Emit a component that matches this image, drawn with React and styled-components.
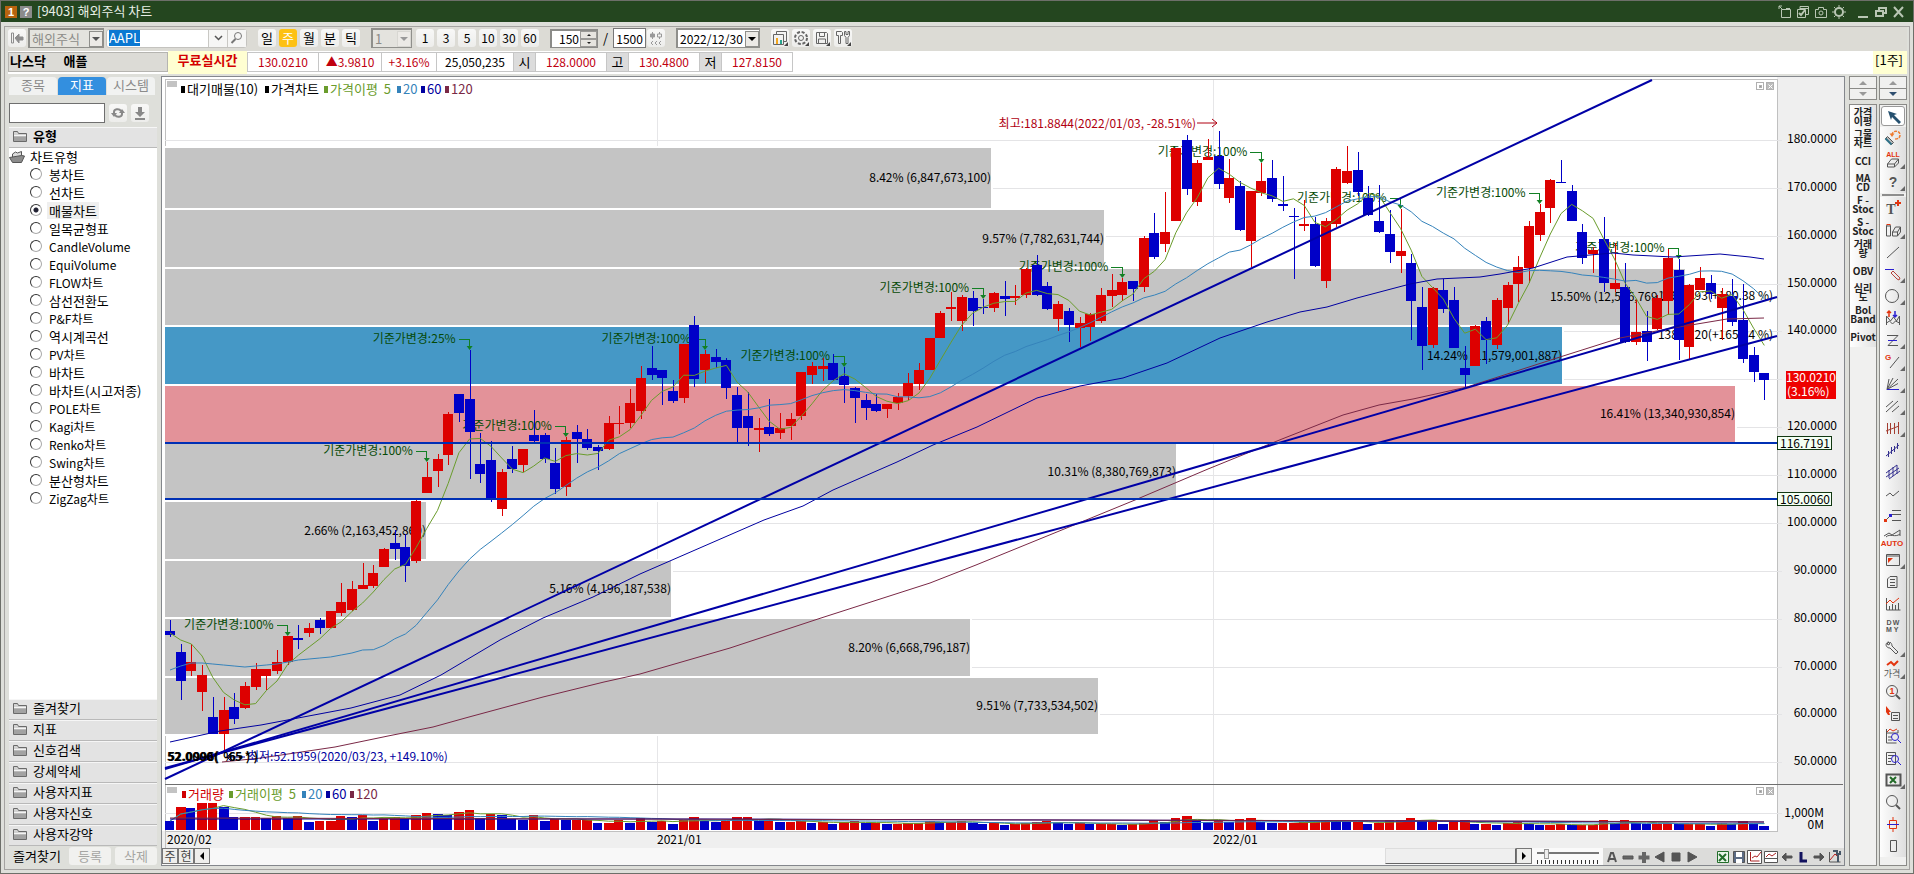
import React, { useEffect, useLayoutEffect, useRef, useState } from "react";
import styled, { createGlobalStyle, css } from "styled-components";

const UI = `"Noto Sans CJK KR", "Liberation Sans", sans-serif`;

const GlobalStyle = createGlobalStyle`
  *, *::before, *::after { box-sizing: border-box; }
  html, body, #root { height: 100%; }
  body { margin: 0; background: #dddcd7; color: #000; font: 13px/18px ${UI}; overflow: hidden; }
  button, input, select { font: inherit; color: inherit; margin: 0; padding: 0; border: 0; border-radius: 0; background: none; }
  svg { display: block; }
`;

/* ---------- window shell ---------- */
const Window = styled.div`
  display: flex; flex-direction: column; height: 100vh; min-height: 640px;
  border: 1px solid #6d6f69; background: #dedfda;
`;
const TitleBar = styled.header`
  display: flex; align-items: center; height: 21px; flex: none; padding: 0 6px 0 4px;
  background: #24461f; color: #e9efe6;
`;
const Badge = styled.span`
  width: 12px; height: 12px; margin-right: 3px; font: bold 11px/12px "Liberation Sans", sans-serif;
  text-align: center; color: #fff; background: ${(p) => p.$bg};
`;
const Title = styled.h1` margin: 0 auto 0 2px; font-size: 13px; line-height: 18px; font-weight: 400; padding-bottom: 2px; `;
const TitleTools = styled.div` display: flex; gap: 2px; color: #b9c6b4; `;
const TitleButton = styled.button` width: 16px; height: 16px; margin-left: ${(p) => (p.$gap ? 6 : 0)}px; `;
const Body = styled.div` display: flex; flex: 1; min-height: 0; padding: 4px 3px 3px; `;
const Frame = styled.div`
  display: flex; flex-direction: column; flex: 1; min-width: 0; padding: 0 2px 3px 3px;
  border: 1px solid #a5a3a1;
`;

/* ---------- toolbar ---------- */
const Toolbar = styled.div` display: flex; align-items: center; gap: 11px; height: 24px; flex: none; padding-bottom: 2px; background: #dcdbd5; `;
const Group = styled.div` display: flex; align-items: center; gap: ${(p) => p.$gap ?? 3}px; `;
const Key = styled.button`
  display: grid; place-items: center; width: 18px; height: 18px; border-radius: 3px; line-height: 16px;
  background: ${(p) => (p.$on ? "#fdc113" : "linear-gradient(#f8f8f7, #ededeb)")};
  color: ${(p) => (p.$on ? "#fff" : "#000")};
  ${(p) => p.$num && css`font-size: 12px;`}
`;
const SelectWrap = styled.span`
  display: grid; align-items: center; width: ${(p) => p.$w}px; height: 20px;
  border: 2px solid #8f8f8b; border-width: 2px 1px 1px 2px; background: ${(p) => p.$bg || "#e4e3de"};
  & > * { grid-area: 1 / 1; }
`;
const Select = styled.select`
  appearance: none; width: 100%; height: 16px; padding-left: 2px; font-size: ${(p) => (p.$num ? 12 : 13)}px; line-height: 16px;
  color: ${(p) => p.$color || "#8c8c88"}; outline: 0;
`;
const Arrow = styled.span`
  justify-self: end; display: grid; place-items: center; width: 14px; height: 16px;
  border: 1px solid ${(p) => p.$bc || "#8f8f8b"}; background: #eceae6; pointer-events: none;
  &::after { content: ""; border: 4px solid transparent; border-top-color: ${(p) => p.$c || "#555"}; border-bottom: 0; }
`;
const SearchField = styled.div`
  display: flex; width: 141px; height: 19px; border-radius: 3px; background: #fff; border: 1px solid #c4c3bf;
  button { width: 19px; display: grid; place-items: center; border-left: 1px solid #c9c8c4; background: #f6f6f5; }
`;
const CodeInput = styled.input`
  width: 101px; padding-left: 2px; outline: 0; line-height: 16px;
  &::selection { background: #0a78d2; color: #fff; }
`;
const CountField = styled.div`
  display: flex; width: 48px; height: 19px; border: 2px solid #8b8b88; border-width: 2px 1px 1px 2px; background: #fff;
  input { width: 28px; padding-right: 1px; text-align: right; font-size: 12px; line-height: 15px; outline: 0; }
`;
const Stepper = styled.div`
  display: flex; flex-direction: column; flex: 1;
  button { flex: 1; display: grid; place-items: center; background: #e6e4df; border: 1px solid #9a9996; }
`;
const TotalInput = styled.input`
  width: 33px; height: 20px; border: 1px solid #777; background: #fff; text-align: center; font-size: 12px; line-height: 16px; outline: 0;
`;

/* ---------- quote row ---------- */
const QuoteRow = styled.div` display: flex; align-items: stretch; height: 23px; flex: none; background: #fff; `;
const Name = styled.div`
  width: 160px; height: 20px; margin-top: 1px; padding-left: 1px; border: 1px solid #b5b4b0; background: #dcdbd6;
  font-weight: 700; line-height: 16px; white-space: pre;
`;
const LiveTag = styled.div`
  width: 79px; background: #ffffd2; color: #d40000; font-weight: 700; text-align: center; line-height: 18px;
`;
const Cell = styled.div`
  width: ${(p) => p.$w}px; height: 20px; margin-top: 1px; border: 1px solid #c6c6c6; border-left-width: ${(p) => (p.$first ? 1 : 0)}px;
  background: ${(p) => (p.$head ? "#dcdcdc" : "#fff")}; color: ${(p) => p.$c || "#000"};
  font-size: ${(p) => (p.$head ? 13 : 12)}px; line-height: 18px; text-align: center;
`;
const PeriodTag = styled.div` margin-left: auto; width: 34px; padding-right: 4px; background: #ffffd2; text-align: right; line-height: 18px; `;

/* ---------- main grid ---------- */
const Main = styled.main`
  display: grid; grid-template-columns: 149px minmax(0, 1fr) 58px; column-gap: 4px;
  flex: 1; min-height: 0; padding-top: 2px;
`;
const Sidebar = styled.aside` display: flex; flex-direction: column; min-height: 0; padding-left: 1px; `;
const Tabs = styled.div` display: flex; gap: 1px; height: 20px; padding-top: 1px; `;
const Tab = styled.button`
  width: 48px; height: 18px; padding-bottom: 2px; border-radius: 4px 4px 0 0; line-height: 16px;
  background: ${(p) => (p.$on ? "#338fdf" : "#f1f2f1")}; color: ${(p) => (p.$on ? "#fff" : "#8b8b8b")};
`;
const FindRow = styled.div` display: flex; align-items: center; gap: 4px; height: 31px; padding-top: 3px; flex: none; `;
const FindInput = styled.input` width: 96px; height: 20px; border: 1px solid #6f6f6f; background: #fff; `;
const SectionHead = styled.button`
  display: flex; align-items: center; gap: 5px; flex: none; width: 100%; height: 21px; padding: 0 0 3px 3px; line-height: 16px;
  background: #e3e3e3; border-bottom: 1px solid #b9b9b9; border-top: 1px solid #f6f6f6; text-align: left;
  font-weight: ${(p) => (p.$bold ? 700 : 400)};
`;
const Tree = styled.div` flex: 1; min-height: 0; overflow: hidden; background: #fff; `;
const TreeRoot = styled.div` display: flex; align-items: center; gap: 5px; height: 17px; line-height: 16px; `;
const Option = styled.label`
  display: flex; align-items: center; gap: 5px; height: 18px; padding-left: 21px; font-size: 13px; line-height: 18px;
  span { padding: 0 2px; font-size: ${(p) => (p.$latin ? 12 : 13)}px; line-height: 17px; background: ${(p) => (p.$on ? "#efefef" : "none")}; }
`;
const Radio = styled.input`
  appearance: none; width: 12px; height: 12px; border-radius: 50%; border: 1px solid #333; background: #fff;
  border-right-color: #aaa; border-bottom-color: #aaa;
  &:checked { background: radial-gradient(#223 0 2px, #fff 3px); }
`;
const SideFoot = styled.div`
  display: flex; align-items: center; gap: 4px; height: 20px; flex: none; padding: 0 0 1px 4px;
  button { width: 42px; height: 18px; border-radius: 3px; background: #f1f1ef; color: #a5a5a2; line-height: 16px; }
  span { width: 52px; }
`;

/* ---------- chart panel ---------- */
const ChartPanel = styled.section`
  display: flex; flex-direction: column; min-width: 0; min-height: 0;
  border: 1px solid #84878c; background: #fff;
`;
const ChartArea = styled.div`
  flex: 1; min-height: 0; overflow: hidden;
  svg { width: 100%; height: 100%; font: 12px ${UI}; }
`;
const ChartFoot = styled.div` display: flex; height: 17px; flex: none; background: #fafafa; `;
const FootKey = styled.button`
  display: grid; place-items: center; width: 16px; height: 16px; font-size: 12px; line-height: 14px; color: #444;
  border: 1px solid #777; background: #eeeeec;
`;
const Track = styled.div` display: flex; flex: 1; justify-content: flex-end; background: #f8f8f8; `;
const Thumb = styled.div` width: 131px; height: 16px; border: 1px solid #888; border-color: #ddd #666 #666 #ddd; background: #efefef; `;
const ZoomRange = styled.input`
  appearance: none; width: 62px; height: 16px; margin: 0 4px 0 5px;
  background:
    linear-gradient(#777, #777) 0 4px / 100% 2px no-repeat,
    repeating-linear-gradient(90deg, #333 0 1px, transparent 1px 4px) 0 12px / 100% 4px no-repeat;
  &::-webkit-slider-thumb { appearance: none; width: 5px; height: 10px; margin-top: -5px; background: #eee; border: 1px solid #999; }
`;
const FootTools = styled.div` display: flex; align-items: center; width: 241px; padding-left: 1px; background: #dcdcda; `;
const FootTool = styled.button` display: grid; place-items: center; width: 16px; height: 17px; margin-left: ${(p) => (p.$gap ? 15 : 0)}px; `;

/* ---------- right columns ---------- */
const ToolColumns = styled.div` display: grid; grid-template-columns: 28px 28px; column-gap: 2px; min-height: 0; `;
const ToolColumn = styled.div` display: flex; flex-direction: column; gap: 4px; min-height: 0; `;
const Pager = styled.div`
  flex: none; border: 1px solid #8a8a87;
  button { display: grid; place-items: center; width: 100%; height: 11px; background: #f0f0ef; }
  button + button { border-top: 1px solid #8a8a87; }
`;
const ToolList = styled.div`
  display: flex; flex-direction: column; flex: 1; min-height: 0; overflow: hidden;
  border: 1px solid #8a8a87; background: #f0f0ef;
`;
const Indicator = styled.button`
  flex: none; height: 22px; font-size: 10px; font-weight: 700; line-height: 9px; white-space: pre; color: #222;
  background: linear-gradient(90deg, #fff, #e2e2e2);
`;
const ToolButton = styled.button`
  display: grid; place-items: center; flex: none; height: 22px; background: linear-gradient(90deg, #fdfdfd, #dedede);
  ${(p) => p.$on && css`background: #fff; border: 1px solid #999; border-radius: 3px; height: 20px; margin: 1px;`}
`;
const Rule = styled.hr` flex: none; width: 22px; height: 2px; margin: 1px 2px; border: 0; background: #8d8d8d; `;

/* ---------- data ---------- */
/* direction, body top, body bottom, high, low */
const CANDLES = `
b 631 635 620 637|b 652 681 644 700|r 662 671 644 676|r 675 692 665 711|b 717 734 697 734|r 710 734 697 752|b 707 719 693 724|r 686 708 682 709|r 669 687 663 690|r 669 676 669 690|
r 662 671 650 674|r 636 662 636 665|b 638 640 625 649|r 628 633 623 637|b 620 628 618 634|r 611 628 611 628|r 602 613 583 616|r 589 610 581 611|r 585 589 563 589|r 573 586 565 588|
r 549 567 548 567|b 543 549 530 560|b 547 566 534 582|r 501 561 499 563|r 477 493 462 493|r 459 471 454 487|r 414 455 412 465|b 394 413 394 422|b 399 432 350 479|b 464 474 433 483|
b 460 499 441 502|r 472 509 469 516|b 459 469 446 473|r 449 465 449 472|b 435 441 410 444|b 435 459 433 463|b 463 489 448 494|r 440 487 437 496|b 432 439 425 463|b 439 448 429 450|
b 447 451 445 470|r 423 449 416 450|r 423 424 406 434|r 403 423 389 428|r 378 411 366 419|b 368 375 346 380|b 370 378 370 405|b 391 401 380 403|r 344 398 344 403|b 325 379 316 387|
r 354 370 350 383|b 357 362 349 368|b 360 388 358 399|b 395 428 387 442|b 416 428 392 446|r 428 430 418 452|b 427 434 399 436|r 428 433 413 439|r 419 426 413 440|r 372 416 372 420|
r 366 375 362 384|r 366 369 358 381|b 363 380 354 381|b 376 385 367 403|b 388 398 387 423|b 400 408 394 420|b 404 411 394 412|r 404 409 404 418|r 397 403 393 410|r 383 396 373 400|
r 370 384 363 390|r 338 370 338 370|r 313 338 311 338|r 307 309 292 321|r 297 321 295 331|b 298 311 291 326|b 307 308 299 314|r 293 308 292 312|b 296 299 281 316|r 296 298 285 305|
r 269 295 268 298|b 265 295 255 296|b 286 309 282 310|r 304 319 301 331|b 311 325 308 342|r 323 328 317 347|r 314 327 313 341|r 295 321 288 323|r 290 296 274 307|r 282 295 278 301|
b 281 289 281 301|r 238 287 236 292|b 233 257 213 259|r 232 244 192 252|r 148 221 148 221|b 140 189 135 195|r 163 202 160 206|r 157 160 139 160|b 156 184 131 189|r 178 198 159 203|
b 186 230 181 231|r 191 241 191 267|r 181 193 163 196|b 178 199 160 202|b 204 206 176 211|b 216 217 208 279|r 224 226 200 231|b 224 266 217 267|r 221 281 218 288|r 169 224 167 227|
r 171 183 146 184|b 170 192 152 196|b 198 215 186 216|b 221 232 185 233|b 234 252 210 263|r 251 256 209 273|b 263 301 254 340|b 307 346 287 370|r 288 345 287 348|b 290 309 279 313|
b 300 348 287 348|b 368 375 346 387|r 326 366 325 366|b 321 340 317 364|r 300 345 298 349|r 285 308 282 324|r 267 284 256 302|r 226 268 221 283|r 212 235 204 241|r 180 208 179 223|
b 182 183 160 183|b 191 221 185 221|b 232 258 224 264|r 250 254 247 273|b 239 283 217 292|r 283 289 243 292|b 287 342 263 343|r 332 342 299 345|b 331 342 311 361|r 298 329 295 330|
r 258 301 249 315|b 270 340 259 360|r 285 347 284 359|r 278 290 267 290|b 283 294 275 299|r 294 308 288 340|b 296 322 279 326|b 320 359 284 363|b 355 372 347 382|b 373 380 373 400`
  .trim().split("|").map((row) => {
    const [d, top, bottom, high, low] = row.trim().split(" ");
    return { up: d === "r", top: +top, bottom: +bottom, high: +high, low: +low };
  });

const VOLUMES = [
  9, 23, 22, 27, 27, 23, 13, 13, 13, 12, 14, 12, 14, 8, 9, 9, 14, 13, 15, 9, 12, 13, 12, 15, 17, 16, 15, 18, 20, 12,
  16, 15, 11, 10, 15, 9, 11, 10, 10, 10, 7, 7, 10, 7, 12, 8, 9, 6, 10, 13, 9, 8, 9, 13, 13, 9, 11, 8, 8, 9,
  7, 8, 6, 8, 9, 7, 7, 6, 6, 7, 7, 9, 8, 8, 9, 7, 6, 7, 5, 6, 7, 8, 9, 7, 6, 7, 6, 6, 6, 5,
  6, 7, 10, 8, 12, 14, 9, 8, 9, 8, 11, 12, 8, 7, 7, 7, 8, 9, 10, 9, 8, 8, 6, 7, 10, 10, 12, 9, 9, 6,
  8, 10, 6, 6, 5, 7, 8, 6, 5, 5, 6, 5, 5, 5, 10, 7, 10, 7, 6, 6, 7, 6, 6, 6, 4, 7, 6, 9, 6, 4,
];

const PROFILE = [
  [148, 208, 991, "8.42% (6,847,673,100)"],
  [210, 267, 1104, "9.57% (7,782,631,744)"],
  [269, 325, 1685, "15.50% (12,596,769,148)"],
  [327, 384, 1562, "14.24% (11,579,001,887)", "#4598c6"],
  [386, 442, 1735, "16.41% (13,340,930,854)", "#e39299"],
  [444, 500, 1176, "10.31% (8,380,769,873)"],
  [502, 559, 426, "2.66% (2,163,452,860)"],
  [561, 617, 671, "5.16% (4,196,187,538)"],
  [619, 676, 970, "8.20% (6,668,796,187)"],
  [678, 734, 1098, "9.51% (7,733,534,502)"],
];

const SPLITS = [[11, "100%"], [24, "100%"], [28, "25%"], [37, "100%"], [50, "100%"], [63, "100%"], [76, "100%"], [89, "100%"], [102, "100%"], [115, "100%"], [128, "100%"], [141, "100%"]];

const MA60 = [[170, 742], [220, 731], [261, 725], [298, 718], [351, 708], [400, 695], [441, 675], [473, 656], [500, 640], [543, 618], [593, 597], [640, 574], [764, 520], [803, 506], [833, 490], [897, 462], [933, 445], [977, 427], [1037, 398], [1080, 386], [1123, 378], [1167, 363], [1220, 338], [1267, 322], [1300, 312], [1327, 307], [1357, 298], [1410, 284], [1437, 279], [1480, 277], [1500, 274], [1533, 268], [1567, 257], [1613, 253], [1633, 255], [1673, 257], [1720, 254], [1750, 257], [1764, 259]];
const MA120 = [[222, 762], [261, 758], [335, 747], [388, 736], [433, 727], [469, 717], [543, 697], [604, 682], [640, 674], [730, 648], [821, 618], [930, 583], [976, 565], [1074, 525], [1135, 500], [1208, 469], [1282, 439], [1343, 415], [1379, 405], [1413, 399], [1467, 387], [1560, 357], [1620, 338], [1667, 329], [1727, 319], [1764, 318]];
const MA20_HEAD = [670, 666, 663, 663, 664, 665, 666, 667, 666, 665, 664, 662, 660, 659, 658, 657, 655, 653, 650];
const MA5_HEAD = [633, 640, 644, 656];
const TRENDS = [[165, 779, 1652, 80], [165, 769, 1777, 297], [165, 768, 1777, 336]];

const CHART_TYPES = ["봉차트", "선차트", "매물차트", "일목균형표", "CandleVolume", "EquiVolume", "FLOW차트", "삼선전환도", "P&F차트", "역시계곡선", "PV차트", "바차트", "바차트(시고저종)", "POLE차트", "Kagi차트", "Renko차트", "Swing차트", "분산형차트", "ZigZag차트"];
const SECTIONS = ["즐겨찾기", "지표", "신호검색", "강세약세", "사용자지표", "사용자신호", "사용자강약"];
const INDICATORS = ["가격\n이평", "그물\n차트", "CCI", "MA\nCD", "F -\nStoc", "S -\nStoc", "거래\n량", "OBV", "심리\n도", "Bol\nBand", "Pivot"];

const RED = "#dd0000";
const BLUE = "#0000c8";
const GREEN = "#6a9c2c";
const SKY = "#3583bb";
const NAVY = "#0000a0";
const WINE = "#7a2846";

const candleX = (i) => 170 + i * 10.7;

function average(values, span, head) {
  return values.map((v, i) => {
    if (i < span - 1) return head ? head[i] : values.slice(0, i + 1).reduce((a, b) => a + b, 0) / (i + 1);
    return values.slice(i - span + 1, i + 1).reduce((a, b) => a + b, 0) / span;
  });
}
const CLOSES = CANDLES.map((c) => (c.up ? c.top : c.bottom));
const MA5 = average(CLOSES, 5, MA5_HEAD);
const MA20 = average(CLOSES, 20, MA20_HEAD);
const VMA5 = average(VOLUMES, 5);
const VMA20 = average(VOLUMES, 20);

/* ---------- chart ---------- */
function Legend({ y, items }) {
  return items.map(([x, text, color]) => (
    <g key={text + x} fill={color}>
      <rect x={x - 162} y={y - 7} width="4" height="7" />
      <text x={x - 156} y={y + 1} fontSize="13" style={{ whiteSpace: "pre" }}>{text}</text>
    </g>
  ));
}

function PaneButtons({ x, y }) {
  return (
    <g fill="none" stroke="#b0b0b0" shapeRendering="crispEdges">
      <rect x={x} y={y} width="7" height="7" />
      <rect x={x + 3} y={y + 3} width="2" height="2" fill="#999" />
      <rect x={x + 10} y={y} width="7" height="7" fill="#bbb" />
      <path d={`M${x + 12} ${y + 2}l4 4m0-4l-4 4`} stroke="#fff" shapeRendering="auto" />
    </g>
  );
}

function StockChart() {
  const host = useRef(null);
  const [{ w, h }, setSize] = useState({ w: 1682, h: 771 });
  useLayoutEffect(() => {
    const measure = () => {
      const r = host.current.getBoundingClientRect();
      setSize({ w: Math.round(r.width), h: Math.round(r.height) });
    };
    measure();
    const ro = new ResizeObserver(measure);
    ro.observe(host.current);
    return () => ro.disconnect();
  }, []);

  const right = w - 67;
  const split = h - 64;
  const X = (v) => 3 + ((v - 165) * (right - 3)) / 1612;
  const Y = (v) => 2 + ((v - 79) * (split - 2)) / 705;
  const base = h - 18;
  const line = (pts) => pts.map(([a, b]) => `${X(a).toFixed(1)},${Y(b).toFixed(1)}`).join(" ");
  const series = (vals) => line(vals.map((v, i) => [candleX(i), v]));
  const volLine = (vals) => vals.map((v, i) => `${X(candleX(i)).toFixed(1)},${(base - v).toFixed(1)}`).join(" ");
  const cw = Math.max(3, Math.round((10 * (right - 3)) / 1612));

  return (
    <ChartArea ref={host}>
      <svg role="img" aria-label="AAPL 주봉 차트">
        <rect x={right} y="0" width={w - right} height={h} fill="#efefef" />
        <rect x="0" y={h - 17} width={w} height="17" fill="#efefef" />
        <g shapeRendering="crispEdges" fill="none">
          <path d={`M3 ${h}V2.5H${right + 0.5}V${h - 16.5}H3`} stroke="#c0c0c0" />
          {Array.from({ length: 14 }, (_, i) => (
            <path key={i} d={`M3 ${Math.round(Y(140 + i * 47.87))}.5H${right + 5}`} stroke="#e4e4e6" />
          ))}
          {[657, 1213].map((v) => <path key={v} d={`M${Math.round(X(v))}.5 3V${h - 18}`} stroke="#e6e6e8" />)}
          <path d={`M3 ${base - 17}.5H${right + 5}`} stroke="#e4e4e6" />
        </g>

        <g shapeRendering="crispEdges">
          {PROFILE.map(([t, b, r, , fill]) => (
            <rect key={t} x="3" y={Y(t)} width={X(r) - 3} height={Y(b) - Y(t)} fill={fill || "#c4c4c4"} stroke="#fff" strokeWidth="4" paintOrder="stroke" />
          ))}
        </g>
        <g textAnchor="end">
          {PROFILE.map(([t, b, r, label]) => <text key={t} x={X(r)} y={Y((t + b) / 2) + 4}>{label}</text>)}
          <text x={X(1773)} y={Y(296) + 4}>146.6293(+180.38 %)</text>
          <text x={X(1773)} y={Y(335) + 4}>138.4720(+165.84 %)</text>
        </g>

        <g fill="#064a06">
          {SPLITS.map(([i, pct]) => {
            const x = X(candleX(i));
            const y = Y(CANDLES[i].high - 11);
            return (
              <g key={i}>
                <text x={x - 14} y={y + 4} textAnchor="end">기준가변경:{pct}</text>
                <path d={`M${x - 11} ${y}H${x}V${y + 7}`} fill="none" stroke="#128024" shapeRendering="crispEdges" />
                <path d={`M${x - 3} ${y + 7}h6l-3 4z`} fill="#128024" />
              </g>
            );
          })}
        </g>

        <g shapeRendering="crispEdges">
          {CANDLES.map((c, i) => {
            const x = Math.round(X(candleX(i)));
            const fill = c.up ? RED : BLUE;
            const top = Math.round(Y(c.top));
            return (
              <g key={i} fill={fill}>
                <rect x={x} y={Math.round(Y(c.high))} width="1" height={Math.max(1, Math.round(Y(c.low) - Y(c.high)))} />
                <rect x={x - 5} y={top} width={cw} height={Math.max(1, Math.round(Y(c.bottom) - top))} />
              </g>
            );
          })}
        </g>

        <g fill="none" strokeWidth="1">
          <polyline points={series(MA5)} stroke={GREEN} />
          <polyline points={series(MA20)} stroke={SKY} />
          <polyline points={line(MA60)} stroke={NAVY} />
          <polyline points={line(MA120)} stroke={WINE} />
        </g>
        <g stroke="#0000a6" strokeWidth="2">
          {TRENDS.map(([a, b, c, d]) => <line key={d} x1={X(a)} y1={Y(b)} x2={X(c)} y2={Y(d)} />)}
          <path d={`M3 ${Y(443)}H${right}M3 ${Y(499)}H${right}`} stroke="#0030b4" shapeRendering="crispEdges" />
        </g>

        <g fill="#b00010">
          <text x={X(1196)} y={Y(123) + 5} textAnchor="end">최고:181.8844(2022/01/03, -28.51%)</text>
          <path d={`M${X(1197)} ${Y(123)}h20m-5-4l5 4-5 4`} fill="none" stroke="#b00010" />
        </g>
        <g fill="#0000a0">
          <text x={X(248)} y={Y(757) + 4}>최저:52.1959(2020/03/23, +149.10%)</text>
          <path d={`M${X(245)} ${Y(757)}h-18m4-4l-4 4 4 4`} fill="none" stroke="#0000a0" />
        </g>
        <g fontWeight="700">
          <text x={X(167)} y={Y(757) + 4} style={{ whiteSpace: "pre" }}>52.0000(  %5 * )</text>
          <text x={X(168)} y={Y(757) + 4} style={{ whiteSpace: "pre" }}>52.0996(  -6 • )</text>
        </g>

        <rect x="5" y="4" width="10" height="6" fill="#c3c3c3" />
        <Legend y={16} items={[[181, "대기매물(10)", "#000"], [265, "가격차트", "#000"], [324, "가격이평  5", GREEN], [397, "20", SKY], [421, "60", NAVY], [445, "120", WINE]]} />
        <PaneButtons x={right - 20.5} y={5.5} />

        <g>
          {Array.from({ length: 14 }, (_, i) => i !== 5 && (
            <text key={i} x={w - 7} y={Y(139 + i * 47.87) + 4} textAnchor="end">{180 - i * 10}.0000</text>
          ))}
        </g>
        <g shapeRendering="crispEdges">
          <rect x={w - 58} y={Y(371)} width="50" height="28" fill="#ee0000" />
          {[443, 499].map((v) => (
            <rect key={v} x={right + 0.5} y={Y(v) - 6.5} width="54" height="13" fill="#f4fff4" stroke="#123812" />
          ))}
        </g>
        <g fill="#fff">
          <text x={w - 58} y={Y(382)}>130.0210</text>
          <text x={w - 57} y={Y(396)}>(3.16%)</text>
        </g>
        <text x={right + 3} y={Y(443) + 5}>116.7191</text>
        <text x={right + 3} y={Y(499) + 5}>105.0060</text>

        <path d={`M3 ${split + 0.5}H${w - 1}`} stroke="#6e6e6e" />
        <rect x="5" y={split + 3} width="10" height="6" fill="#c3c3c3" />
        <g shapeRendering="crispEdges">
          {VOLUMES.map((v, i) => (
            <rect key={i} x={Math.round(X(candleX(i))) - 5} y={base - v} width={cw - 1 + (i % 2)} height={v} fill={i > 0 && v >= VOLUMES[i - 1] ? RED : BLUE} />
          ))}
        </g>
        <g fill="none">
          <polyline points={volLine(VMA5)} stroke={GREEN} />
          <polyline points={volLine(VMA20)} stroke={SKY} />
          <path d={`M${X(170)} ${base - 11}L${X(700)} ${base - 11}L${X(1764)} ${base - 8}`} stroke={NAVY} />
          <path d={`M${X(170)} ${base - 12}L${X(1500)} ${base - 9}L${X(1764)} ${base - 8}`} stroke={WINE} />
        </g>
        <Legend y={split + 14} items={[[182, "거래량", "#d00000"], [229, "거래이평  5", GREEN], [302, "20", SKY], [326, "60", NAVY], [350, "120", WINE]]} />
        <PaneButtons x={right - 20.5} y={split + 3.5} />
        <g textAnchor="end">
          <text x={w - 20} y={base - 13}>1,000M</text>
          <text x={w - 20} y={base - 1}>0M</text>
        </g>
        <text x="5" y={h - 4}>2020/02</text>
        <text x={X(657)} y={h - 4}>2021/01</text>
        <text x={X(1213)} y={h - 4}>2022/01</text>
      </svg>
    </ChartArea>
  );
}

/* ---------- icons ---------- */
function Icon({ w = 16, h = 16, children, ...rest }) {
  return (
    <svg width={w} height={h} viewBox={`0 0 ${w} ${h}`} fill="none" stroke="currentColor" aria-hidden="true" {...rest}>
      {children}
    </svg>
  );
}
const Folder = ({ open }) => (
  <Icon w={16} h={14} stroke="#555">
    {open ? (
      <>
        <path d="M3.5 7V4l3-2 2 1 4-1.500v4" fill="#ddd" />
        <path d="M.5 7.500l12-2 3 .5-3 6.500h-9z" fill="#8c8c8c" />
      </>
    ) : (
      <>
        <path d="M1.500 12.500v-10h4l1 2h8v8z" fill="#d2d2d2" stroke="#6a6a6a" />
        <path d="M2 7.500h12v4.500H2z" fill="#a2a2a2" stroke="none" />
        <path d="M2 6.500h12" stroke="#f4f4f4" />
      </>
    )}
  </Icon>
);
const Tri = ({ up, c = "#999", s = 8 }) => (
  <Icon stroke="none" fill={c} viewBox="0 0 8 4" width={s} height={s / 2}>
    <path d={up ? "M0 4l4-4 4 4z" : "M0 0h8L4 4z"} />
  </Icon>
);

const G = "#555";
const R = "#e2340f";
const B = "#2a1fd0";
const corner = <path d="M25 20v-5l-5 5z" fill="#666" stroke="none" />;
const T = ({ x, y, s = 8, f = G, w = 700, children, font = "Liberation Sans" }) => (
  <text x={x} y={y} fontSize={s} fill={f} stroke="none" fontWeight={w} fontFamily={`"${font}", "Noto Sans CJK KR", sans-serif`} textAnchor="middle">{children}</text>
);

const DRAW_TOOLS = [
  ["선택", <path d="M6 4l9 3-3 1 7 7-2 2-7-7-1 3z" fill="#25506f" stroke="none" />],
  ["되돌리기", <><path d="M12 8c0-5 8-5 8 0 0 3-2 4-5 4" stroke="#ee7a2e" strokeWidth="1.500" strokeDasharray="3 1" /><path d="M9.500 6.500h5L12 10z" fill="#ee7a2e" stroke="none" /><path d="M5.500 11.500l2-2 6 6-2 2z" fill="#bbb" /><path d="M5.500 11.500l6 6" stroke="#2d6f86" strokeWidth="2" /></>],
  ["전체 지우기", <><T x={13} y={8} s={7} f={R}>ALL</T><path d="M7.500 15l4-5h7l-4 5zM7.500 15v3h7v-3M14.500 18l4-4v-4" />{corner}</>],
  ["도움말", <><T x={13} y={16} s={14}>?</T>{corner}</>],
  null,
  ["문자", <><T x={11} y={17} s={14} font="Liberation Serif">T</T><path d="M18 3v6M15 6h6" stroke={R} strokeWidth="2" /></>],
  ["도형", <><path d="M6.500 7v10h4V7zM6.500 7c0-2 4-2 4 0" /><path d="M6.500 5.500h4" stroke={R} /><path d="M12.500 13l3-5h5l-3 5zM12.500 13v4h5v-4M17.500 17l3-4V8" />{corner}</>],
  ["추세선", <path d="M7 17L19 6" />],
  ["지우개", <><path d="M5 6.500h9" stroke={B} /><path d="M11 10l2-2 7 7-1 2-2-1z" stroke="#b5423a" />{corner}</>],
  ["원", <><circle cx="12" cy="11" r="6.500" />{corner}</>],
  ["파동", <><path d="M6.500 18V9l4 5 3-4 3 4 3-5v9M6.500 16l3-2 3 3 3-3 4 2" /><path d="M9 10V4M7 6l2-2 2 2" stroke={R} strokeWidth="1.500" /><path d="M15 4v6M13 8l2 2 2-2" stroke={B} strokeWidth="1.500" /></>],
  ["Z선", <><path d="M7 6.500h11L8 16.500h10" /><path d="M8 11.500h9" stroke={B} />{corner}</>],
  ["각도선", <><T x={8} y={9} f={R}>G</T><path d="M10 17L19 6" />{corner}</>],
  ["부채꼴", <><path d="M7 16.500L9 6M7 16.500L13 5M7 16.500L18 6M7 16.500l11-6" /><path d="M7 16.500h12" stroke={B} />{corner}</>],
  ["평행선", <><path d="M6 12l7-6M6 17L18 6M12 17l7-6" />{corner}</>],
  ["시간대", <><path d="M7.500 6v11M10.500 6v11M14.500 6v11M18.500 5v12" stroke="#a33c30" /><path d="M6 14l13-5" stroke="#a33c30" />{corner}</>],
  ["채널1", <path d="M6 17l13-11M8.500 12v6M11.500 8v7M14.500 7v6M17.500 4v6" stroke="#34308f" />],
  ["채널2", <path d="M6 12l11-8M6 16l13-9M9 18l11-8M9 9v8M13 6v9M17 4v9" stroke="#34308f" />],
  ["곡선", <path d="M6 13l4-3 3 3 6-5" />],
  ["수평 추세", <><path d="M12 5.500h9M12 9.500h9M12 15.500h9" /><path d="M5 16l5-5" stroke={G} /><path d="M4 14h3v3H4z" fill={R} stroke="none" /><path d="M9 9h3v3H9z" fill={B} stroke="none" /></>],
  ["자동", <><path d="M4 9l5-3 3 2 8-5v6M6 10c4-4 9 1 14-3" /><T x={12} y={19} s={8} f={R}>AUTO</T></>],
  ["창", <><path d="M6.500 5.500h13v11h-13zM6 7h14" /><path d="M8 9h5l-5 5z" fill={R} stroke="none" />{corner}</>],
  ["문서", <path d="M10 5.500h7v11H7.500V8zM10 8.500h5M10 11.500h5M10 14.500h5" />],
  ["차트", <><path d="M6.500 5v12h14M9.500 17v-4M12.500 17v-6M15.500 17v-5M18.500 17v-7" /><path d="M6 11l4-4 3 3 6-5" stroke={R} /></>],
  ["주기", <><T x={9} y={10} s={7}>D</T><T x={16} y={10} s={7}>W</T><T x={9} y={17} s={7}>M</T><T x={16} y={17} s={7}>Y</T></>],
  ["도구", <><path d="M9 5c-4 0-4 6 1 6l6 6 2-2-6-6c0-2-1-3-2-4l-1 3-2-1z" />{corner}</>],
  ["가격", <><path d="M7 6l4-3 3 3 4-4" stroke={R} strokeWidth="2" /><T x={12} y={18} s={9} w={400}>가격</T>{corner}</>],
  ["확대1", <><circle cx="12" cy="10" r="5.500" /><path d="M16 14l4 4" strokeWidth="2" /><T x={12} y={13} s={9} f={R}>1</T></>],
  ["목록 선택", <><path d="M6 3l5 6-2 0 1 3-2 0-2-3z" fill={R} stroke="none" /><path d="M11.500 9.500h8v8h-8zM13 12.500h5M13 15.500h5" /></>],
  ["차트 조회", <><path d="M6.500 4v14h10M6 8h12V5M8 12h4M8 15h4" /><path d="M7 7l3-3 3 2 4-2" stroke={R} /><circle cx="15" cy="12" r="3.500" stroke={B} /><path d="M18 15l3 3" stroke={B} /></>],
  ["목록 조회", <><path d="M6.500 5.500h9v12h-9zM8 8.500h6M8 11.500h3M8 14.500h3" /><circle cx="15" cy="12" r="3.500" stroke={B} /><path d="M18 15l3 3" stroke={B} /></>],
  ["엑셀", <><path d="M6.500 5.500h14v11h-14z" strokeWidth="2" /><path d="M10 8l6 6M16 8l-6 6" stroke="#226b28" strokeWidth="2" />{corner}</>],
  ["돋보기", <><circle cx="12" cy="10" r="5.500" /><path d="M16 14l4 4" strokeWidth="2" /></>],
  ["십자선", <><path d="M9.500 7.500h7v8h-7zM13 4v4M13 15v4" stroke={R} /><path d="M7 11.500h12" stroke={B} /></>],
  ["봉", <path d="M10.500 5.500h6v11h-6z" />],
];

const TITLE_ICONS = [
  <><path d="M4.500 5.500h9v8h-9zM9 4.500h4" /><path d="M2 5V2h3M2 2l4 4" /></>,
  <><path d="M2.500 5.500h8v8h-8zM5 5V2.500h8.500v8H11M5 4.500h8" /><path d="M4 9l2 2 4-5" strokeWidth="2" /></>,
  <><path d="M2.500 5.500h3v-2h5v2h3v8h-11z" /><circle cx="8" cy="9" r="2" /></>,
  <><circle cx="8" cy="8" r="4" strokeWidth="2" /><path d="M8 1v2M8 13v2M1 8h2M13 8h2M3 3l1.500 1.500M11.500 11.500L13 13M13 3l-1.500 1.500M3 13l1.500-1.500" /></>,
  <path d="M3 13h10" strokeWidth="2" />,
  <path d="M3 7h7v5H3zM6 6V4h7v5h-2" strokeWidth="2" />,
  <path d="M3 3l9 10M12 3L3 13" strokeWidth="2" />,
];

const ACTION_ICONS = [
  ["차트 형식", <><path d="M4.500 4.500v-3h10v10h-3M1.500 4.500h10v10h-10z" /><path d="M4 14V8h2v6z" fill="#f3a61e" stroke="none" /><path d="M8 14v-4h2v4z" fill="#2aa58e" stroke="none" /></>],
  ["설정", <><circle cx="8" cy="8" r="6" strokeDasharray="3 1.700" strokeWidth="2" /><circle cx="8" cy="8" r="2.500" /></>],
  ["저장", <path d="M2.500 2.500h10l1 1v10h-11zM5.500 2.500v4h5v-4M4.500 13v-4h7v4" />],
  ["도구", <path d="M1.500 1.500h5l1 1v3h-2v8h-2v-8h-2zM9.500 1.500v4l1.500 2v6h2v-6l1.500-2v-4h-1.500v3h-2v-3z" />],
];

const FOOT_ICONS = [
  ["문자", <path d="M4 13L7 4h2l3 9M5 10h6" strokeWidth="2" />],
  ["축소", <path d="M3 7h10v3H3z" fill="#666" />],
  ["확대", <path d="M8 3v11M2.500 8.500h11" strokeWidth="4" stroke="#666" />],
  ["이전", <path d="M12 3v10L3 8z" fill="#555" />],
  ["정지", <path d="M4 4h8v8H4z" fill="#555" />],
  ["다음", <path d="M4 3v10l9-5z" fill="#555" />],
  ["엑셀", <><path d="M2.500 2.500h11v11h-11z" stroke="#236e2b" fill="#e9f5e9" /><path d="M4 5l7 7M11 5l-7 7" stroke="#236e2b" strokeWidth="2" /></>, 1],
  ["저장", <><path d="M2.500 2.500h11v11h-11z" fill="#5b6b84" /><path d="M5 3h6v5H5zM5 10h6v4H5z" fill="#fff" stroke="none" /></>],
  ["차트 보기", <><path d="M.5 1.500h14v13H.5z" fill="#fff" /><path d="M3.500 3v9h9M5 9l3-2 2 1 4-5" stroke="#a22" /></>],
  ["지표 보기", <><path d="M1.500 2.500h13v11h-13zM1 9.500h14" fill="#fff" /><path d="M3 8l3-3 3 2 4-3" stroke="#a22" /></>],
  ["왼쪽", <path d="M3 8l4-4v3h6v2H7v3z" fill="#555" />],
  ["로그", <path d="M6 3v9h6" stroke="#12125e" strokeWidth="3" />],
  ["오른쪽", <path d="M13 8L9 4v3H3v2h6v3z" fill="#555" />],
  ["도구", <><path d="M2.500 3v10h11" /><path d="M3 11l5-6 4 4" stroke="#b22" /><path d="M6 2h4v3h3V2M11 5v8" strokeWidth="2" stroke="#456" /></>],
];

/* ---------- app ---------- */
export default function App() {
  const code = useRef(null);
  const [type, setType] = useState("매물차트");
  useEffect(() => {
    code.current.focus();
    code.current.select();
  }, []);

  return (
    <Window>
      <GlobalStyle />
      <TitleBar>
        <Badge $bg="#b8640f">1</Badge>
        <Badge $bg="#8b8b8b">?</Badge>
        <Title>[9403] 해외주식 차트</Title>
        <TitleTools>
          {TITLE_ICONS.map((d, i) => (
            <TitleButton key={i} $gap={i === 4} aria-label={["분리", "복사", "캡처", "설정", "최소화", "최대화", "닫기"][i]}>
              <Icon>{d}</Icon>
            </TitleButton>
          ))}
        </TitleTools>
      </TitleBar>
      <Body>
        <Frame>
          <Toolbar>
            <Group $gap={2}>
              <Key aria-label="처음"><Icon w={14} h={12} stroke="#8d8d8d"><path d="M1.500 1v10h2V1z" /><path d="M5 6l4-4v3h4v3H9v3z" fill="#8d8d8d" /></Icon></Key>
              <SelectWrap $w={76}>
                <Select aria-label="시장" defaultValue="해외주식"><option>해외주식</option></Select>
                <Arrow />
              </SelectWrap>
              <SearchField>
                <CodeInput ref={code} aria-label="종목코드" defaultValue="AAPL" />
                <button aria-label="목록"><Icon w={9} h={6} stroke="#555"><path d="M1 1l3.500 3.500L8 1" strokeWidth="1.500" /></Icon></button>
                <button aria-label="검색"><Icon w={14} h={14} stroke="#777"><circle cx="8" cy="5" r="3.500" /><path d="M5.500 8L1.500 12" strokeWidth="2" /></Icon></button>
              </SearchField>
            </Group>
            <Group>
              {["일", "주", "월", "분", "틱"].map((t) => <Key key={t} $on={t === "주"}>{t}</Key>)}
            </Group>
            <Group $gap={4}>
              <SelectWrap $w={41}>
                <Select aria-label="간격" defaultValue="1"><option>1</option></Select>
                <Arrow $c="#999" $bc="#d8d7d2" />
              </SelectWrap>
              <Group>{[1, 3, 5, 10, 30, 60].map((n) => <Key key={n} $num>{n}</Key>)}</Group>
            </Group>
            <Group $gap={5}>
              <CountField>
                <input aria-label="봉 개수" defaultValue="150" />
                <Stepper>
                  <button aria-label="증가"><Tri up c="#222" s={4} /></button>
                  <button aria-label="감소"><Tri c="#222" s={4} /></button>
                </Stepper>
              </CountField>
              <span>/</span>
              <Group $gap={1}>
                <TotalInput aria-label="전체 개수" defaultValue="1500" />
                <Key aria-label="이전 데이터"><Icon w={14} h={15} stroke="#999"><path d="M3.500 1v7M1.500 3h4v3h-4z" fill="#999" /><path d="M10.500 1v2M10.500 6v2M8.500 3h4v3h-4zM4 10l-2 2 2 2M8 10l-2 2 2 2M12 10l-2 2 2 2" /></Icon></Key>
              </Group>
            </Group>
            <SelectWrap $w={84} $bg="#fff">
              <Select aria-label="기준일" $num $color="#000" defaultValue="2022/12/30"><option>2022/12/30</option></Select>
              <Arrow $c="#000" />
            </SelectWrap>
            <Group>
              {ACTION_ICONS.map(([name, d]) => (
                <Key key={name} aria-label={name}><Icon stroke="#666">{d}<path d="M16 16v-4l-4 4z" fill="#444" stroke="none" /></Icon></Key>
              ))}
            </Group>
          </Toolbar>
          <QuoteRow>
            <Name>{"나스닥      애플"}</Name>
            <LiveTag>무료실시간</LiveTag>
            <Cell $w={72} $first $c="#c00010">130.0210</Cell>
            <Cell $w={63} $c="#c00010">▲3.9810</Cell>
            <Cell $w={55} $c="#c00010">+3.16%</Cell>
            <Cell $w={77}>25,050,235</Cell>
            <Cell $w={22} $head>시</Cell>
            <Cell $w={71} $c="#c00010">128.0000</Cell>
            <Cell $w={22} $head>고</Cell>
            <Cell $w={71} $c="#c00010">130.4800</Cell>
            <Cell $w={22} $head>저</Cell>
            <Cell $w={71} $c="#c00010">127.8150</Cell>
            <PeriodTag>[1주]</PeriodTag>
          </QuoteRow>
          <Main>
            <Sidebar>
              <Tabs>
                <Tab>종목</Tab>
                <Tab $on>지표</Tab>
                <Tab>시스템</Tab>
              </Tabs>
              <FindRow>
                <FindInput aria-label="지표 검색" />
                <Key aria-label="새로고침"><Icon w={16} h={14} stroke="#888" strokeWidth="2"><path d="M4 9V6c0-3 5-4 7-1M12 5v3c0 3-5 4-7 1" /><path d="M1 7h6L4 11zM9 7h6l-3-4z" fill="#888" stroke="none" /></Icon></Key>
                <Key aria-label="내려받기"><Icon w={14} h={15} stroke="none" fill="#888"><path d="M5 1h4v5h3l-5 5-5-5h3zM2 12h10v2H2z" /></Icon></Key>
              </FindRow>
              <SectionHead $bold><Folder />유형</SectionHead>
              <Tree>
                <TreeRoot><Folder open />차트유형</TreeRoot>
                {CHART_TYPES.map((t) => (
                  <Option key={t} $on={t === type} $latin={/[A-Za-z]/.test(t)}>
                    <Radio type="radio" name="chart-type" checked={t === type} onChange={() => setType(t)} />
                    <span>{t}</span>
                  </Option>
                ))}
              </Tree>
              {SECTIONS.map((s) => <SectionHead key={s}><Folder />{s}</SectionHead>)}
              <SideFoot><span>즐겨찾기</span><button>등록</button><button>삭제</button></SideFoot>
            </Sidebar>
            <ChartPanel>
              <StockChart />
              <ChartFoot>
                <FootKey>주</FootKey>
                <FootKey>현</FootKey>
                <FootKey aria-label="왼쪽으로"><Icon w={4} h={8} stroke="none" fill="#000"><path d="M4 0v8L0 4z" /></Icon></FootKey>
                <Track><Thumb /></Track>
                <FootKey aria-label="오른쪽으로"><Icon w={4} h={8} stroke="none" fill="#000"><path d="M0 0v8l4-4z" /></Icon></FootKey>
                <ZoomRange type="range" aria-label="간격 조절" defaultValue="12" />
                <FootTools>
                  {FOOT_ICONS.map(([name, d, gap]) => (
                    <FootTool key={name} $gap={gap} aria-label={name}><Icon stroke="#555">{d}</Icon></FootTool>
                  ))}
                </FootTools>
              </ChartFoot>
            </ChartPanel>
            <ToolColumns>
              <ToolColumn>
                <Pager><button aria-label="위"><Tri up /></button><button aria-label="아래"><Tri /></button></Pager>
                <ToolList>
                  {INDICATORS.map((t) => <Indicator key={t}>{t}</Indicator>)}
                </ToolList>
              </ToolColumn>
              <ToolColumn>
                <Pager><button aria-label="위"><Tri up /></button><button aria-label="아래"><Tri c="#2f4f70" /></button></Pager>
                <ToolList>
                  {DRAW_TOOLS.map((tool, i) =>
                    tool ? (
                      <ToolButton key={i} $on={i === 0} aria-label={tool[0]}><Icon w={26} h={22} stroke={G}>{tool[1]}</Icon></ToolButton>
                    ) : <Rule key={i} />
                  )}
                </ToolList>
              </ToolColumn>
            </ToolColumns>
          </Main>
        </Frame>
      </Body>
    </Window>
  );
}
